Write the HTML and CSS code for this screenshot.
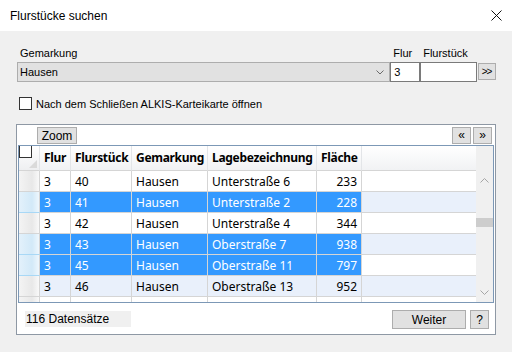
FILE: index.html
```html
<!DOCTYPE html>
<html lang="de">
<head>
<meta charset="utf-8">
<title>Flurstücke suchen</title>
<link rel="stylesheet" href="styles.css">
</head>
<body>
<div class="window">
  <div class="titlebar">
    <span class="title">Flurstücke suchen</span>
    <svg class="close" width="11" height="11" viewBox="0 0 11 11"><path d="M0.5 0.5L10.5 10.5M10.5 0.5L0.5 10.5" stroke="#111" stroke-width="1" fill="none"/></svg>
  </div>
  <div class="content">
    <div class="search">
      <div class="field f-gem">
        <div class="lbl">Gemarkung</div>
        <div class="combo"><span>Hausen</span><svg width="8" height="5" viewBox="0 0 8 5"><path d="M0.5 0.5L4 4L7.5 0.5" stroke="#6a6a6a" fill="none"/></svg></div>
      </div>
      <div class="field f-flur">
        <div class="lbl">Flur</div>
        <div class="input">3</div>
      </div>
      <div class="field f-fs">
        <div class="lbl">Flurstück</div>
        <div class="input"></div>
      </div>
      <div class="btn go">&gt;&gt;</div>
    </div>
    <div class="checkrow"><span class="cb"></span><span>Nach dem Schließen ALKIS-Karteikarte öffnen</span></div>
    <div class="group">
      <div class="toolbar">
        <div class="btn zoom">Zoom</div>
        <div class="btn nav">«</div>
        <div class="btn nav">»</div>
      </div>
      <div class="grid">
        <div class="table">
          <div class="hd rh"><span class="hcb"></span><svg class="sort" width="8" height="8" viewBox="0 0 8 8"><path d="M8 0L8 8L0 8Z" fill="#dadada"/></svg></div>
          <div class="hd">Flur</div>
          <div class="hd">Flurstück</div>
          <div class="hd">Gemarkung</div>
          <div class="hd">Lagebezeichnung</div>
          <div class="hd">Fläche</div>
          <div class="hd fill"></div>

          <div class="c rh"></div><div class="c">3</div><div class="c">40</div><div class="c">Hausen</div><div class="c">Unterstraße 6</div><div class="c num">233</div><div class="c fill"></div>

          <div class="c rh sel"></div><div class="c s">3</div><div class="c s">41</div><div class="c s">Hausen</div><div class="c s">Unterstraße 2</div><div class="c s num">228</div><div class="c fill alt"></div>

          <div class="c rh"></div><div class="c">3</div><div class="c">42</div><div class="c">Hausen</div><div class="c">Unterstraße 4</div><div class="c num">344</div><div class="c fill"></div>

          <div class="c rh sel"></div><div class="c s">3</div><div class="c s">43</div><div class="c s">Hausen</div><div class="c s">Oberstraße 7</div><div class="c s num">938</div><div class="c fill alt"></div>

          <div class="c rh sel"></div><div class="c s">3</div><div class="c s">45</div><div class="c s">Hausen</div><div class="c s">Oberstraße 11</div><div class="c s num">797</div><div class="c fill"></div>

          <div class="c rh"></div><div class="c alt">3</div><div class="c alt">46</div><div class="c alt">Hausen</div><div class="c alt">Oberstraße 13</div><div class="c alt num">952</div><div class="c fill alt"></div>

          <div class="c rh part"></div><div class="c part"></div><div class="c part"></div><div class="c part"></div><div class="c part"></div><div class="c part"></div><div class="c fill part"></div>
        </div>
        <div class="vscroll">
          <svg class="arrow up" width="9" height="5" viewBox="0 0 9 5"><path d="M0.5 4.5L4.5 0.5L8.5 4.5" stroke="#a6a6a6" fill="none"/></svg>
          <div class="thumb"></div>
          <svg class="arrow down" width="9" height="5" viewBox="0 0 9 5"><path d="M0.5 0.5L4.5 4.5L8.5 0.5" stroke="#a6a6a6" fill="none"/></svg>
        </div>
      </div>
      <div class="status">
        <div class="count">116 Datensätze</div>
        <div class="btn weiter">Weiter</div>
        <div class="btn help">?</div>
      </div>
    </div>
  </div>
</div>
</body>
</html>
```
FILE: styles.css
```css
* { box-sizing: border-box; }
html, body { margin: 0; padding: 0; }
body {
  width: 512px;
  height: 352px;
  overflow: hidden;
  background: #f0f0f0;
  font-family: "Liberation Sans", Arial, sans-serif;
  font-size: 11px;
  color: #000;
}
.window { width: 512px; height: 352px; display: flex; flex-direction: column; }
.titlebar {
  height: 31px;
  background: #fff;
  display: flex;
  align-items: center;
  padding: 1px 0 0 10px;
}
.title { font-family: "Liberation Sans", Arial, sans-serif; font-size: 12px; flex: 1; }
.close { margin-right: 10px; margin-top: -1px; }

.content { padding: 16px 16px 0 16px; }

.search { display: flex; margin-left: 1px; }
.field { display: flex; flex-direction: column; }
.lbl { height: 15px; line-height: 13px; padding-left: 3px; }
.f-gem { width: 374px; }
.f-flur { width: 30px; }
.f-fs { width: 57px; }
.combo {
  height: 20px;
  background: #e1e1e1;
  border: 1px solid #adadad;
  display: flex;
  align-items: center;
  justify-content: space-between;
  padding: 0 5px 0 2px;
}
.combo svg { margin-top: 1px; }
.input {
  height: 20px;
  background: #fff;
  border: 1px solid #7a7a7a;
  padding: 2px 0 0 3px;
  line-height: 14px;
}
.btn {
  background: #e1e1e1;
  border: 1px solid #adadad;
  display: flex;
  align-items: center;
  justify-content: center;
}
.go {
  width: 18px;
  height: 17px;
  align-self: flex-end;
  margin: 0 0 2px 1px;
  font-size: 10px;
  letter-spacing: -1px;
  padding-right: 1px;
}

.checkrow { display: flex; align-items: center; margin: 15px 0 0 3px; height: 13px; gap: 4px; }
.cb { width: 13px; height: 13px; border: 1px solid #333; background: #fff; }

.group {
  margin-top: 14px;
  width: 480px;
  height: 211px;
  border: 1px solid #8e98a4;
  background: #fff;
  display: flex;
  flex-direction: column;
}
.toolbar { display: flex; padding: 2px 3px 0 20px; gap: 2px; }
.zoom { width: 40px; height: 17px; margin-right: auto; font-size: 12px; }
.nav { width: 19px; height: 17px; font-size: 12px; line-height: 1; padding-bottom: 2px; }

.grid {
  margin: 1px 1px 0 1px;
  height: 158px;
  border: 1px solid #7c98b6;
  display: flex;
  overflow: hidden;
}
.table {
  display: grid;
  grid-template-columns: 21px 31px 61px 76px 109px 45px 114px;
  grid-template-rows: 25px repeat(6, 21px) 5px;
  font-family: "Noto Sans", "Open Sans", sans-serif;
  font-size: 12px;
}
.hd {
  background: linear-gradient(#ffffff, #f1f2f4);
  border-right: 1px solid #e3e5e8;
  border-bottom: 1px solid #d5d5d5;
  font-weight: bold;
  display: flex;
  align-items: center;
  padding: 0 0 1px 4px;
  letter-spacing: -0.3px;
}
.hd.fill { border-right: 0; }
.hd.rh { position: relative; padding: 0; background: linear-gradient(#ffffff, #eeeff1); }
.hcb {
  position: absolute;
  left: 0;
  top: -1px;
  width: 13px;
  height: 13px;
  border: 1px solid #333;
  background: #fff;
}
.sort { position: absolute; right: 2px; bottom: 2px; }

.c {
  border-right: 1px solid #d5d5d5;
  border-bottom: 1px solid #d5d5d5;
  display: flex;
  align-items: center;
  padding: 0 0 0 4px;
  white-space: nowrap;
  overflow: hidden;
  background: #fff;
}
.c.num { justify-content: flex-end; padding: 0 4px 0 0; }
.c.alt { background: #e9f0fb; }
.c.s { background: #3399ff; color: #fff; }
.c.fill { border-right: 0; }
.c.rh {
  background: linear-gradient(to right, #f4f4f4, #e8e8e8 65%, #f9f9f9);
  border-right: 1px solid #d5d5d5;
  border-bottom: 1px solid #d5d5d5;
}
.c.rh.sel {
  background: linear-gradient(to right, #e3f1fb, #d2e9f8 65%, #eef7fd);
  border-bottom-color: #a8d8f6;
}
.c.part { border-bottom: 0; }

.vscroll {
  width: 17px;
  background: #f0f0f0;
  display: flex;
  flex-direction: column;
  align-items: center;
  padding-top: 32px;
}
.arrow.up { margin-bottom: 35px; }
.thumb { width: 17px; height: 9px; background: #cdcdcd; }
.arrow.down { margin-top: 63px; }

.status { display: flex; align-items: flex-start; padding: 7px 6px 0 8px; }
.count { width: 106px; height: 16px; margin-top: 1px; background: #f0f0f0; padding: 1px 0 0 1px; font-size: 12px; line-height: 14px; }
.weiter { width: 74px; height: 19px; margin-left: auto; font-size: 12px; }
.help { width: 19px; height: 19px; margin-left: 4px; font-size: 12px; }
```
